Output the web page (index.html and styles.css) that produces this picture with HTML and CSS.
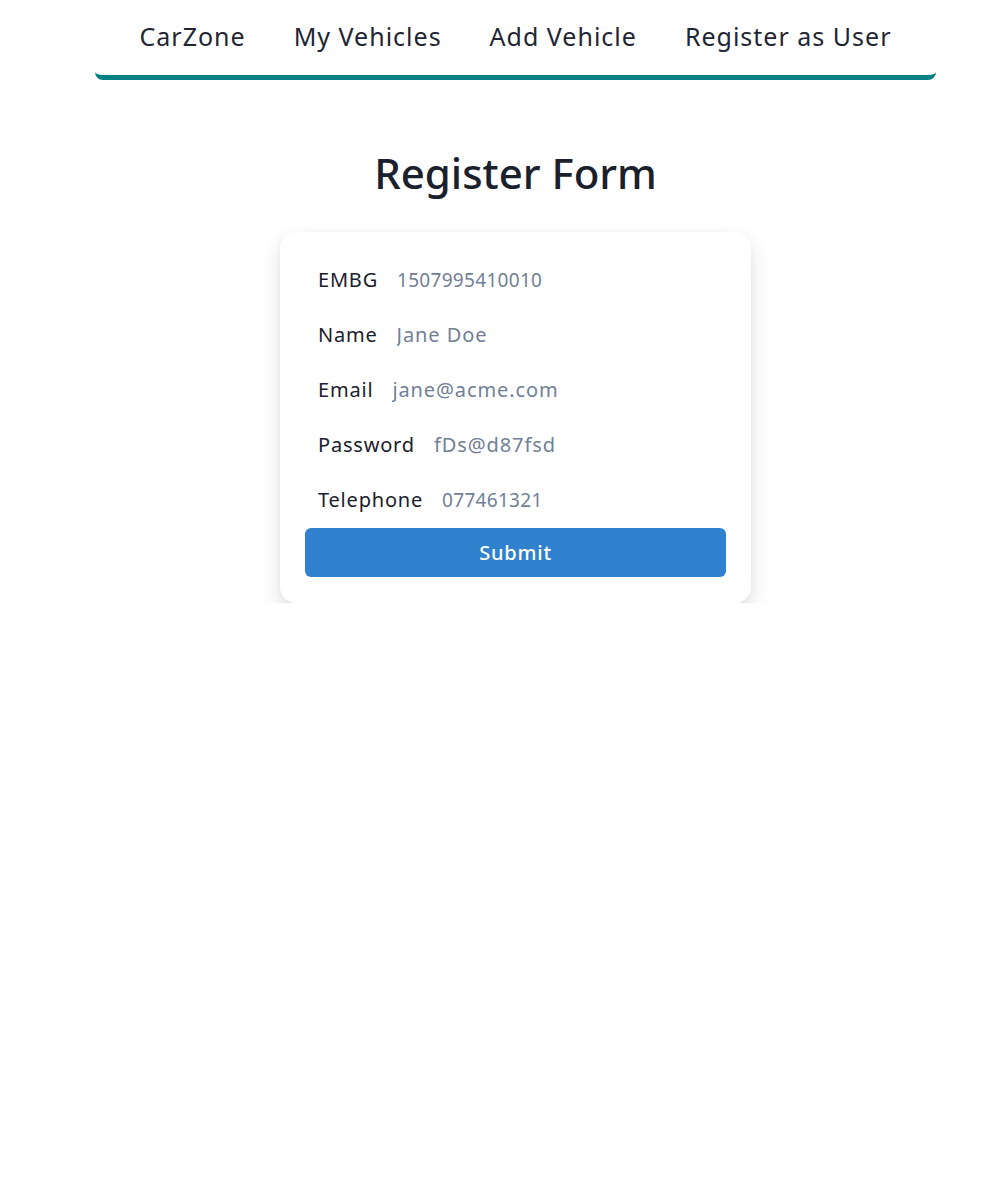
FILE: index.html
```html
<!DOCTYPE html>
<html lang="en">
<head>
<meta charset="utf-8">
<title>Register Form</title>
<link rel="stylesheet" href="styles.css">
</head>
<body>
<div class="page">
  <nav class="nav">
    <a class="nav-link" href="#">CarZone</a>
    <a class="nav-link" href="#">My Vehicles</a>
    <a class="nav-link" href="#">Add Vehicle</a>
    <a class="nav-link" href="#">Register as User</a>
  </nav>
  <h1 class="title">Register Form</h1>
  <form class="card">
    <div class="row"><label class="label">EMBG</label><input class="field numeric" placeholder="1507995410010"></div>
    <div class="row"><label class="label">Name</label><input class="field" placeholder="Jane Doe"></div>
    <div class="row"><label class="label">Email</label><input class="field" placeholder="jane@acme.com"></div>
    <div class="row"><label class="label">Password</label><input class="field" placeholder="fDs@d87fsd"></div>
    <div class="row"><label class="label">Telephone</label><input class="field numeric" placeholder="077461321"></div>
    <button class="submit" type="button">Submit</button>
  </form>
</div>
</body>
</html>
```
FILE: styles.css
```css
html, body {
  margin: 0;
  padding: 0;
  background: #ffffff;
}
body {
  font-family: "Noto Sans", "Open Sans", sans-serif;
  color: #1a202c;
}
.page {
  display: flex;
  flex-direction: column;
  align-items: center;
  padding-left: 39px;
}
.nav {
  box-sizing: border-box;
  width: 841px;
  height: 80px;
  padding-bottom: 4px;
  border-bottom: 5px solid #008080;
  border-radius: 0 0 8px 8px;
  display: flex;
  justify-content: center;
  align-items: center;
  gap: 48px;
}
.nav-link {
  font-size: 25px;
  letter-spacing: 1px;
  color: #1f2533;
  text-decoration: none;
}
.title {
  margin: 69px 0 35px;
  font-size: 42px;
  line-height: 48px;
  font-weight: 500;
  color: #1a202c;
}
.card {
  box-sizing: border-box;
  width: 471px;
  padding: 20px 25px 26px;
  border-radius: 16px;
  background: #fff;
  box-shadow: 0 10px 22px rgba(0, 0, 0, 0.12), 0 2px 6px rgba(0, 0, 0, 0.04);
  display: flex;
  flex-direction: column;
}
.row {
  height: 55px;
  display: flex;
  align-items: center;
  padding-left: 13px;
}
.label {
  font-size: 20px;
  letter-spacing: 0.8px;
  color: #1a202c;
}
.field {
  margin-left: 19px;
  border: none;
  outline: none;
  padding: 0;
  font-family: inherit;
  font-size: 20px;
  letter-spacing: 0.9px;
  color: #718096;
  background: transparent;
  flex: 1;
}
.field.numeric {
  font-size: 19px;
  letter-spacing: 0.3px;
}
.field::placeholder {
  color: #718096;
}
.submit {
  margin-top: 1px;
  height: 49px;
  border: none;
  border-radius: 6px;
  background: #3182ce;
  color: #fff;
  font-family: inherit;
  font-size: 20px;
  font-weight: 500;
  letter-spacing: 0.8px;
}
```
